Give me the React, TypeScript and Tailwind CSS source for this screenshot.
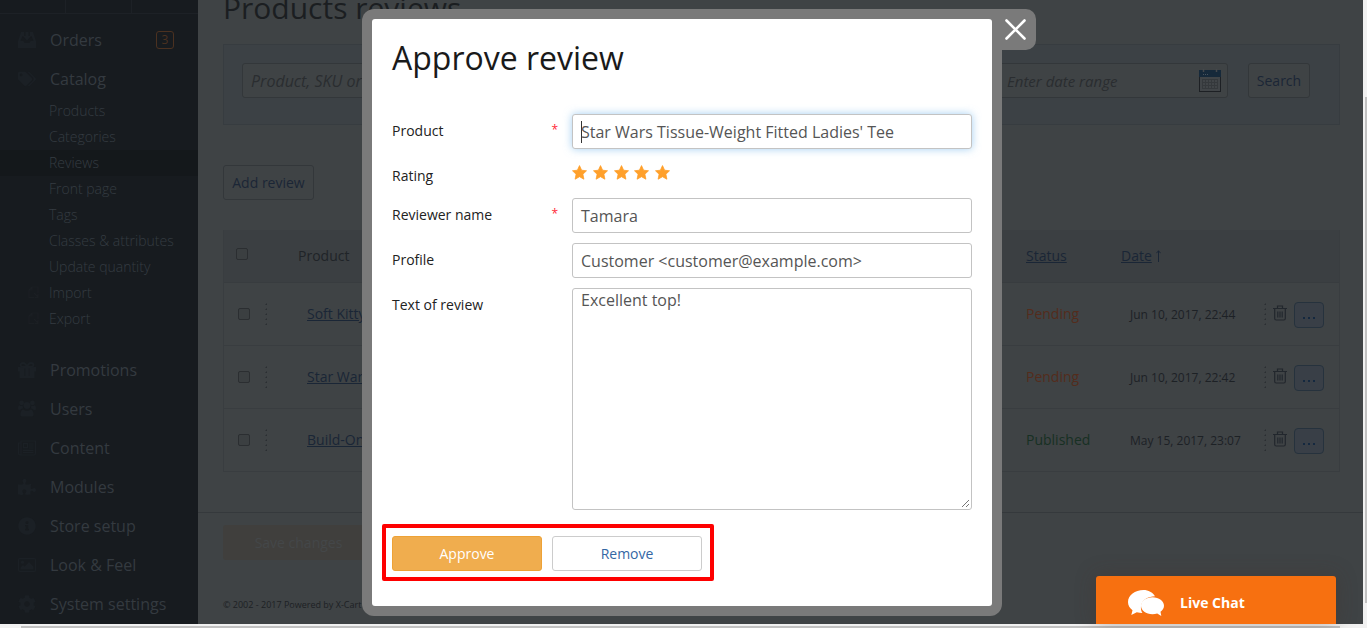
import React from "react";
import {
  FaTags,
  FaPuzzlePiece,
  FaInfoCircle,
  FaCog,
} from "react-icons/fa";

const OrdersIcon = () => (
  <svg viewBox="0 0 18 16" className="h-4 w-[18px]" fill="currentColor">
    <path d="M3 0h3v4H4.500L2.500 9h3l1 2h5l1-2h3l-2-5H12V0h3l3 9v7H0V9z" />
    <path d="M7.500 0h3v4H13L9 8.500 5 4h2.500z" />
  </svg>
);

const GiftIcon = () => (
  <svg viewBox="0 0 18 16" className="h-4 w-[18px]">
    <path d="M0 5h18v4.500h-1.500V16h-15V9.500H0z" fill="currentColor" />
    <path d="M9 5C8 2 6.500 1 5 1S2.500 2 2.500 3 3.500 5 5 5zM9 5c1-3 2.500-4 4-4s2.500 1 2.500 2-1 2-2.500 2z" fill="none" stroke="currentColor" strokeWidth="1.800" />
    <path d="M6.800 6.500v7.500M11.200 6.500v7.500" stroke="#171b1f" strokeWidth="0.700" />
  </svg>
);

const UsersIcon = () => (
  <svg viewBox="0 0 18 17" className="h-[17px] w-[18px]" fill="currentColor">
    <circle cx="9" cy="5.500" r="3.400" />
    <circle cx="3.600" cy="2.900" r="2.400" />
    <circle cx="14.400" cy="2.900" r="2.400" />
    <path d="M4 16.500c-1 0-1.600-.7-1.600-2 0-3 1.200-5 3.200-5 1 .9 2 1.300 3.400 1.300s2.400-.4 3.400-1.300c2 0 3.200 2 3.200 5 0 1.300-.6 2-1.600 2z" />
    <path d="M0 9c0-2 .3-3.800 1.500-3.800.8.700 2 .9 3.300.6-.1 1.200.2 2 .7 2.700C4 8.500 3 9 2.300 10 .8 10 0 9.800 0 9zM18 9c0-2-.3-3.800-1.500-3.800-.8.700-2 .9-3.300.6.1 1.200-.2 2-.7 2.700 1.500 0 2.500.5 3.200 1.500 1.500 0 2.300-.2 2.300-1z" />
  </svg>
);

const NewsIcon = () => (
  <svg viewBox="0 0 18 16" className="h-4 w-[18px]" fill="none" stroke="currentColor" strokeWidth="1.200">
    <path d="M3 1h14.400v12.500q0 1.500-1.500 1.500H2.200Q.6 15 .6 13.500V3H3zv12M3 1v12.500q0 1.500-1 1.500" />
    <path d="M5.500 3.700h4v4h-4zM11 4h4.500M11 6h4.500M11 8h4.500M5 10.300h10.500M5 12.500h10.500" />
  </svg>
);

const ImageIcon = () => (
  <svg viewBox="0 0 18 14" className="h-[14px] w-[18px]">
    <rect x="0.600" y="0.600" width="16.800" height="12.800" rx="1" fill="none" stroke="currentColor" strokeWidth="1.200" />
    <circle cx="4.500" cy="4.200" r="1.600" fill="currentColor" />
    <path d="M2.500 11.500v-2L5 7l1.500 1.500L11 4l4.500 4.500v3z" fill="currentColor" />
  </svg>
);

const SheetIcon = () => (
  <svg viewBox="0 0 12 13" className="h-[13px] w-3" fill="none" stroke="currentColor" strokeWidth="1.200">
    <path d="M4 1h6v6M4 1 1 4v7.500h5M4 1v3H1M6 7l4 4M10 8v3.500H6.500" />
  </svg>
);

const Star = () => (
  <svg viewBox="0 0 15 15" className="size-[15px]" fill="#ffa02b" stroke="#ffa02b" strokeWidth="0.800" strokeLinejoin="round">
    <path d="M7.500.6l2.100 4.600 4.900.6-3.600 3.400 1 5-4.400-2.500-4.400 2.500 1-5L.5 5.800l4.900-.6z" />
  </svg>
);

function MenuItem({ icon, label, badge }: { icon: React.ReactNode; label: string; badge?: string }) {
  return (
    <div className="flex h-[39px] shrink-0 items-center pr-6 pl-[18px]">
      <span className="flex w-[18px] justify-center text-lg text-[#1b2025]">{icon}</span>
      <span className="ml-[14px] grow text-[16px] text-[#343a40]">{label}</span>
      {badge && (
        <span className="flex size-[18px] items-center justify-center rounded-[3px] border border-[#4b3120] text-[12px] text-[#4b3120]">
          {badge}
        </span>
      )}
    </div>
  );
}

const subItems = [
  "Products",
  "Categories",
  "Reviews",
  "Front page",
  "Tags",
  "Classes & attributes",
  "Update quantity",
  "Import",
  "Export",
];

function Sidebar() {
  return (
    <aside className="flex h-full w-[198px] shrink-0 flex-col overflow-hidden bg-[#171b1f]">
      <div className="grid h-[14px] w-full shrink-0 grid-cols-3 border-b border-[#1d2126]">
        <div className="border-r border-[#1d2126]" />
        <div className="border-r border-[#1d2126]" />
      </div>
      <div className="mt-[6px] flex flex-col">
        <MenuItem icon={<OrdersIcon />} label="Orders" badge="3" />
        <MenuItem icon={<FaTags />} label="Catalog" />
        <div className="mb-[18px]">
          {subItems.map((s) => (
            <div
              key={s}
              className={
                "flex h-[26px] items-center pb-[2px] text-[14px] font-light text-[#353c42] " +
                (s === "Reviews" ? "bg-[#14181b]" : "")
              }
            >
              <span className="flex w-[49px] justify-end pr-[9px] text-[#1b1f23]">
                {(s === "Import" || s === "Export") && <SheetIcon />}
              </span>
              {s}
            </div>
          ))}
        </div>
        <MenuItem icon={<GiftIcon />} label="Promotions" />
        <MenuItem icon={<UsersIcon />} label="Users" />
        <MenuItem icon={<NewsIcon />} label="Content" />
        <MenuItem icon={<FaPuzzlePiece />} label="Modules" />
        <MenuItem icon={<FaInfoCircle />} label="Store setup" />
        <MenuItem icon={<ImageIcon />} label="Look & Feel" />
        <MenuItem icon={<FaCog />} label="System settings" />
      </div>
    </aside>
  );
}

const CalendarIcon = () => (
  <svg viewBox="0 0 22 23" className="h-[23px] w-[22px]">
    <rect x="0.500" y="1.500" width="21" height="21" fill="#414548" stroke="#1d2024" />
    <rect x="0" y="1" width="22" height="7" fill="#16293a" />
    <path d="M4.500 0v3M17.500 0v3" stroke="#45494c" strokeWidth="1.500" />
    <path d="M4 5.500h5" stroke="#46525d" strokeDasharray="1 1" />
    <path d="M3 10.500h16M3 13.500h16M3 16.500h16M3 19.500h16M3.500 10v10M6.500 10v10M9.500 10v10M12.500 10v10M15.500 10v10M18.500 10v10" stroke="#35393c" />
  </svg>
);

const TrashIcon = () => (
  <svg viewBox="0 0 14 16" className="h-4 w-[14px]" fill="none" stroke="#22272d" strokeWidth="1.200">
    <path d="M0 3.500h14M4.500 3V1h5v2M1.700 4v9.500q0 1.500 1.500 1.500h7.600q1.500 0 1.500-1.500V4M4.800 6.500v6M7 6.500v6M9.200 6.500v6" />
  </svg>
);

const Dots = () => (
  <svg viewBox="0 0 2 22" className="h-[22px] w-[2px]" fill="#2b2f32">
    <path d="M0 2l2-2v2zM0 7l2-2v2zM0 12l2-2v2zM0 17l2-2v2zM0 22l2-2v2z" />
  </svg>
);

const Check = () => <span className="block size-3 rounded-[2px] border border-[#2b2e31] bg-[#3b3f41]" />;

const rows = [
  { name: "Soft Kitty", status: "Pending", date: "Jun 10, 2017, 22:44" },
  { name: "Star Wars", status: "Pending", date: "Jun 10, 2017, 22:42" },
  { name: "Build-On Brick Mug", status: "Published", date: "May 15, 2017, 23:07" },
];

function ReviewTable() {
  return (
    <div className="mr-[23px] ml-[25px] h-[242px] border border-y-0 border-[#393d40] text-[14px]">
      <div className="flex h-[53px] items-center border-b border-[#383c3f] bg-[#3b3f42] pb-px">
        <div className="w-[74px] pb-[3px] pl-3">
          <Check />
        </div>
        <div className="w-[728px] text-[#202428]">Product</div>
        <div className="w-[95px] text-[#1a2636] underline">Status</div>
        <div className="flex items-center gap-1 text-[#1a2636]">
          <span className="underline">Date</span>
          <svg viewBox="0 0 5 12" className="h-3 w-[5px]" fill="none" stroke="#1a2636">
            <path d="M2.500 12V.8M.4 3.200l2.100-2.400 2.100 2.400" />
          </svg>
        </div>
      </div>
      {rows.map((r) => (
        <div key={r.date} className="flex h-[63px] items-center border-b border-[#393d40]">
          <div className="w-[27px] pl-[14px]">
            <Check />
          </div>
          <div className="w-[56px] pl-[14px]">
            <Dots />
          </div>
          <div className="w-[719px] pb-px text-[#1a2636] underline">{r.name}</div>
          <div className={"w-[104px] pb-px " + (r.status === "Pending" ? "text-[#542c1c]" : "text-[#173023]")}>
            {r.status}
          </div>
          <div className="w-[134px] pt-px text-[12px] text-[#1d2125]">{r.date}</div>
          <Dots />
          <div className="mb-[3px] ml-[7px]">
            <TrashIcon />
          </div>
          <div className="mt-px ml-[7px] flex h-[26px] w-[30px] items-center justify-center rounded-[4px] border border-[#26323d] bg-[#393f47] pt-[6px]">
            <svg viewBox="0 0 12 2" className="h-[2px] w-3" fill="#14283f">
              <path d="M0 0h2v2H0zM5 0h2v2H5zM10 0h2v2h-2z" />
            </svg>
          </div>
        </div>
      ))}
    </div>
  );
}

function Main() {
  return (
    <main className="flex h-full w-[1165px] flex-col overflow-hidden bg-[#3f4345]">
      <h1 className="-mt-[14px] ml-[25px] h-11 shrink-0 text-[30px] leading-[44px] text-[#1b1e21]">
        Products reviews
      </h1>
      <div className="mt-[14px] mr-[23px] ml-[25px] flex h-[81px] shrink-0 border border-[#373c40] bg-[#3c4145] pt-[18px] pl-[18px]">
        <div className="h-[35px] w-[300px] rounded-[3px] border border-[#33373a] bg-[#3f4345] pl-2 text-[16px] leading-[34px] text-[#2a2d30] italic">
          Product, SKU or customer
        </div>
        <div className="ml-[438px] flex h-[35px] w-[248px] items-center justify-between rounded-[3px] border border-[#33373a] bg-[#3f4345] pr-[6px] pl-[26px] text-[15px] text-[#2a2d30] italic">
          <span className="pt-px">Enter date range</span>
          <CalendarIcon />
        </div>
        <div className="ml-5 flex h-[35px] w-[62px] items-center justify-center rounded-[3px] border border-[#33373a] bg-[#3f4345] text-[14px] text-[#1b2636]">
          Search
        </div>
      </div>
      <div className="mt-10 ml-[25px] flex h-[35px] w-[91px] shrink-0 items-center justify-center rounded-[3px] border border-[#33373a] text-[14px] text-[#1b2636]">
        Add review
      </div>
      <div className="mt-[30px] shrink-0">
        <ReviewTable />
      </div>
      <div className="mt-10 shrink-0 border-t border-[#35393c] pt-3 pl-[25px]">
        <div className="flex h-[35px] w-[151px] items-center justify-center rounded-[3px] bg-[#403f3d] text-[14px] text-[#444749]">
          Save changes
        </div>
        <div className="mt-[37px] text-[9px] leading-4 text-[#1d2124]">© 2002 - 2017 Powered by X-Cart</div>
      </div>
    </main>
  );
}

function FormRow({ label, required, className, children }: { label: string; required?: boolean; className: string; children: React.ReactNode }) {
  return (
    <div className={"flex " + className}>
      <div className="flex h-[33px] w-[180px] shrink-0 items-center justify-between pr-[14px] text-[14px] text-[#222]">
        {label}
        {required && <span className="pb-[2px] text-[12px] text-[#ff2838]">*</span>}
      </div>
      {children}
    </div>
  );
}

function ReviewDialog() {
  const field =
    "flex h-[35px] w-[400px] items-center rounded-[3px] border border-[#c3c3c3] bg-white px-2 text-[16px] text-[#555]";
  return (
    <div className="absolute top-[9px] left-[362px] flex items-start">
      <div className="h-[607px] w-[640px] rounded-[12px] rounded-tr-none bg-[#7a7a7a] p-[10px]">
        <div className="flex h-[587px] flex-col rounded-[3px] bg-white pl-5 text-[#1f1f1f]">
          <h2 className="mt-4 h-[46px] text-[32px] leading-[46px] text-[#1a1a1a]">Approve review</h2>
          <FormRow label="Product" required className="mt-[33px]">
            <div className={field + " shadow-[0_0_8px_rgba(102,175,233,0.6)]"}>
              <span className="-mr-px h-[22px] w-px bg-[#333]" />
              Star Wars Tissue-Weight Fitted Ladies' Tee
            </div>
          </FormRow>
          <FormRow label="Rating" className="mt-[10px] h-[35px]">
            <div className="flex h-[27px] w-[98px] items-center justify-between">
              {[0, 1, 2, 3, 4].map((n) => (
                <Star key={n} />
              ))}
            </div>
          </FormRow>
          <FormRow label="Reviewer name" required className="mt-1">
            <div className={field}>Tamara</div>
          </FormRow>
          <FormRow label="Profile" className="mt-[10px]">
            <div className={field}>Customer &lt;customer@example.com&gt;</div>
          </FormRow>
          <FormRow label="Text of review" className="mt-[10px]">
            <div className="flex h-[222px] w-[400px] items-end justify-between rounded-[3px] border border-[#c3c3c3] pl-2 text-[16px] leading-[22px] text-[#555]">
              <span className="self-start">Excellent top!</span>
              <svg viewBox="0 0 9 9" className="mr-px mb-px size-[9px]" stroke="#666" strokeWidth="0.900">
                <path d="M1 8 8 1M5 8 8 5" />
              </svg>
            </div>
          </FormRow>
          <div className="mt-[14px] -ml-[10px] flex h-[57px] w-[332px] items-center gap-[10px] rounded-[2px] border-4 border-[#fe0000] pt-[2px] pl-[6px] text-[14px]">
            <div className="flex h-[35px] w-[150px] items-center justify-center rounded-[3px] border border-[#eea236] bg-[#f0ad4e] text-white">
              Approve
            </div>
            <div className="flex h-[35px] w-[150px] items-center justify-center rounded-[3px] border border-[#ccc] bg-white text-[#3467a4]">
              Remove
            </div>
          </div>
        </div>
      </div>
      <div className="flex h-[41px] w-[34px] rounded-r-[10px] bg-[#7a7a7a] pt-[10px] pl-[3px]">
        <svg viewBox="0 0 21 21" className="size-[21px]" stroke="#fff" strokeWidth="2.600" strokeLinecap="round">
          <path d="M1.500 1.500 19.500 19.500M19.500 1.500 1.500 19.500" />
        </svg>
      </div>
    </div>
  );
}

function LiveChat() {
  return (
    <div className="absolute top-[576px] left-[1096px] flex h-12 w-[240px] items-center rounded-t-[3px] bg-[#f77010] pt-[5px] pl-8 shadow-[0_0_20px_rgba(70,50,40,0.35)]">
      <svg viewBox="0 0 36 26" className="h-[26px] w-9 shrink-0" fill="#fff">
        <path d="M15.500 0C7 0 0 5 0 12c0 3.500 1.800 6.200 4.500 8.300L3.300 25l5.500-2.800q2.700.8 5.700.8C11 17 13 7 27 6.200 24.500 2.300 20.500 0 15.500 0z" />
        <path d="M24.500 7.300C18 7.300 13 11 13 15.800s5 8.400 11.500 8.400q2.500 0 4.700-.6L33.300 26l-.8-4.300C34.700 20.200 36 18 36 15.800c0-4.800-5-8.500-11.500-8.500z" />
      </svg>
      <span className="ml-4 pb-px text-[14px] font-bold text-white">Live Chat</span>
    </div>
  );
}

export default function App() {
  return (
    <div className="relative flex h-[628px] w-[1367px] flex-col overflow-hidden bg-[#f1f1f1] font-['Open_Sans',sans-serif] whitespace-nowrap">
      <div className="flex h-[624px] shrink-0">
        <Sidebar />
        <Main />
        <div className="flex grow bg-[#f1f1f1] pt-[97px] pl-[2px]">
          <div className="h-[506px] w-full bg-[#c1c1c1]" />
        </div>
      </div>
      <div className="flex h-1 pt-[2px] pl-[21px]">
        <div className="h-[2px] w-[1319px] bg-[#c1c1c1]" />
      </div>
      <ReviewDialog />
      <LiveChat />
    </div>
  );
}
